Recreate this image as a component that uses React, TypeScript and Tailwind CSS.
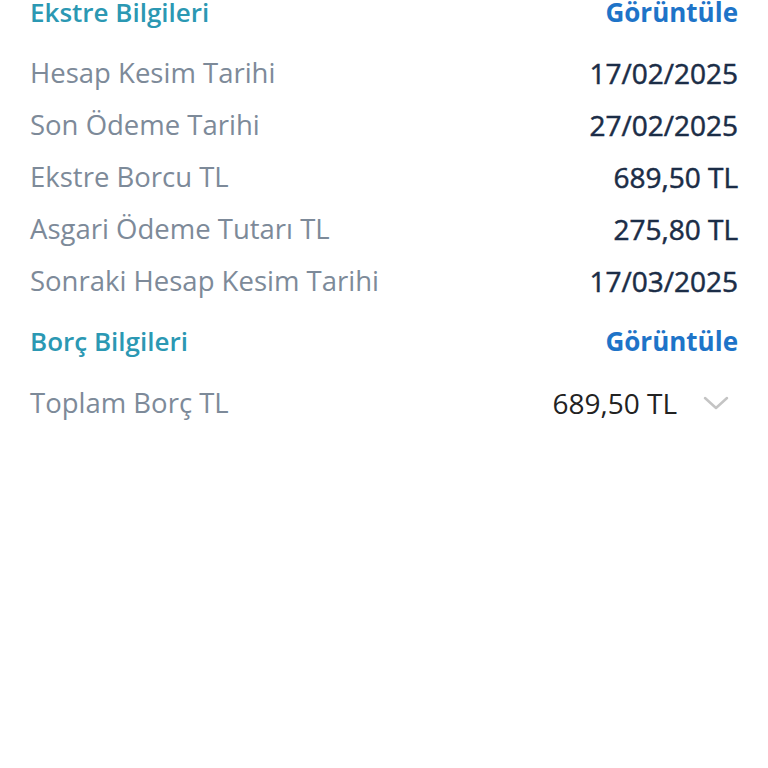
import React from 'react';

const font = { fontFamily: '"Open Sans", "Noto Sans", sans-serif' };

interface RowProps {
  label: string;
  value: string;
}

const InfoRow: React.FC<RowProps> = ({ label, value }) => (
  <div className="flex h-[52px] items-center justify-between">
    <span className="text-[27.5px] text-[#7d8a99]">{label}</span>
    <span className="text-[28px] text-[#1b2d47] [-webkit-text-stroke:0.5px_#1b2d47]">{value}</span>
  </div>
);

const SectionHeader: React.FC<{ title: string }> = ({ title }) => (
  <div className="flex h-9 items-center justify-between">
    <h2 className="text-[26px] font-semibold text-[#2b98b3]">{title}</h2>
    <button className="text-[26px] font-bold text-[#1e74c8]">Görüntüle</button>
  </div>
);

export default function App() {
  const statement = [
    { label: 'Hesap Kesim Tarihi', value: '17/02/2025' },
    { label: 'Son Ödeme Tarihi', value: '27/02/2025' },
    { label: 'Ekstre Borcu TL', value: '689,50 TL' },
    { label: 'Asgari Ödeme Tutarı TL', value: '275,80 TL' },
    { label: 'Sonraki Hesap Kesim Tarihi', value: '17/03/2025' },
  ];

  return (
    <div className="min-h-[768px] w-full overflow-hidden bg-white px-[30px]" style={font}>
      <div className="-mt-[6px]">
        <SectionHeader title="Ekstre Bilgileri" />
        <div className="mt-[17px]">
          {statement.map((row) => (
            <InfoRow key={row.label} label={row.label} value={row.value} />
          ))}
        </div>

        <div className="mt-4">
          <SectionHeader title="Borç Bilgileri" />
        </div>

        <div className="mt-[18px] flex h-[52px] items-center justify-between">
          <span className="text-[27.5px] text-[#7d8a99]">Toplam Borç TL</span>
          <div className="flex items-center gap-[26px]">
            <span className="text-[28px] text-[#222]">689,50 TL</span>
            <svg width="26" height="14" viewBox="0 0 26 14" fill="none" className="mr-[9px]">
              <path d="M2 2 L13 12 L24 2" stroke="#c4c4c4" strokeWidth="2.5" strokeLinecap="round" strokeLinejoin="round" />
            </svg>
          </div>
        </div>
      </div>
    </div>
  );
}
